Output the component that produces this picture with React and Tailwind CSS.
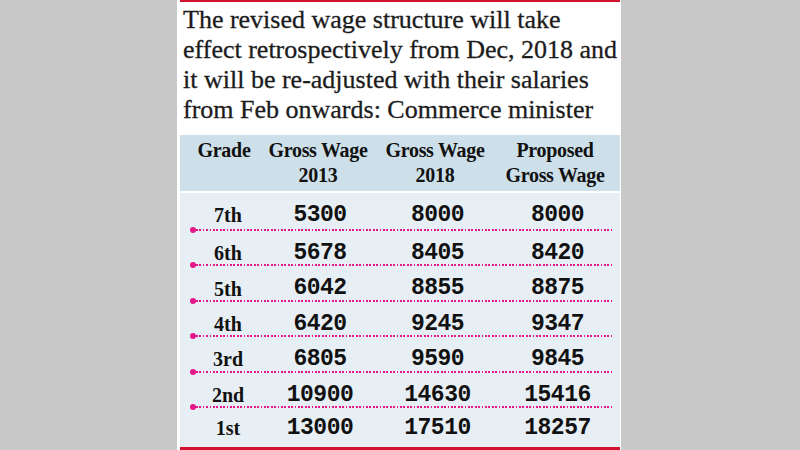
const rows = [
  { grade: "7th", a: "5300", b: "8000", c: "8000" },
  { grade: "6th", a: "5678", b: "8405", c: "8420" },
  { grade: "5th", a: "6042", b: "8855", c: "8875" },
  { grade: "4th", a: "6420", b: "9245", c: "9347" },
  { grade: "3rd", a: "6805", b: "9590", c: "9845" },
  { grade: "2nd", a: "10900", b: "14630", c: "15416" },
  { grade: "1st", a: "13000", b: "17510", c: "18257" },
];

const serif = "font-['Liberation_Serif','Times_New_Roman',serif]";
const mono = "font-['Liberation_Mono','Courier_New',monospace]";

function Separator() {
  return (
    <div className="flex h-[6px] items-center pl-[10px] pr-[8px]">
      <div className="h-[6px] w-[6px] shrink-0 rounded-full bg-[#e4168a]" />
      <div className="h-[2px] flex-1 bg-[repeating-linear-gradient(90deg,#e4168a_0_1.7px,transparent_1.7px_3.4px)]" />
    </div>
  );
}

function Row({ row, className }) {
  return (
    <div className={`grid grid-cols-[86px_104px_130px_110px] items-center text-[#111] ${className}`}>
      <div className={`${serif} pl-[10px] text-center text-[20px] font-bold`}>{row.grade}</div>
      <div className={`${mono} pl-[4px] text-center text-[23px] font-bold tracking-[-0.5px]`}>{row.a}</div>
      <div className={`${mono} pl-[5px] text-center text-[23px] font-bold tracking-[-0.5px]`}>{row.b}</div>
      <div className={`${mono} pl-[5px] text-center text-[23px] font-bold tracking-[-0.5px]`}>{row.c}</div>
    </div>
  );
}

export default function App() {
  return (
    <div className="h-[450px] w-[800px] overflow-hidden bg-[#c8c8c8]">
      <div className="ml-[177px] flex h-[450px] w-[444px] flex-col bg-white pl-[3px] pr-[1px]">
        <div className="h-[2px] bg-[#d2122e]" />
        <div className={`${serif} h-[133px] pl-[3px] pt-[3px] text-[26px] leading-[30px] text-[#1c1c1c] [-webkit-text-stroke:0.3px_#1c1c1c]`}>
          <p>The revised wage structure will take</p>
          <p>effect retrospectively from Dec, 2018 and</p>
          <p>it will be re-adjusted with their salaries</p>
          <p>from Feb onwards: Commerce minister</p>
        </div>
        <div className={`${serif} grid h-[56px] grid-cols-[86px_104px_130px_110px] bg-[#cde0e9] pt-[3px] text-center text-[20px] font-bold leading-[25px] tracking-[-0.3px] text-[#111]`}>
          <div className="pl-[2px]">Grade</div>
          <div>Gross Wage<br />2013</div>
          <div>Gross Wage<br />2018</div>
          <div>Proposed<br />Gross Wage</div>
        </div>
        <div className="mt-[2px] flex flex-1 flex-col bg-[#e7eff4]">
          {rows.map((row, i) => (
            <div key={row.grade}>
              {i > 0 && <Separator />}
              <Row
                row={row}
                className={i === 0 ? "h-[34px] pt-[5px]" : i === rows.length - 1 ? "h-[37px]" : "h-[29.4px] pt-[3px]"}
              />
            </div>
          ))}
        </div>
        <div className="h-[3px] bg-[#d2122e]" />
      </div>
    </div>
  );
}
